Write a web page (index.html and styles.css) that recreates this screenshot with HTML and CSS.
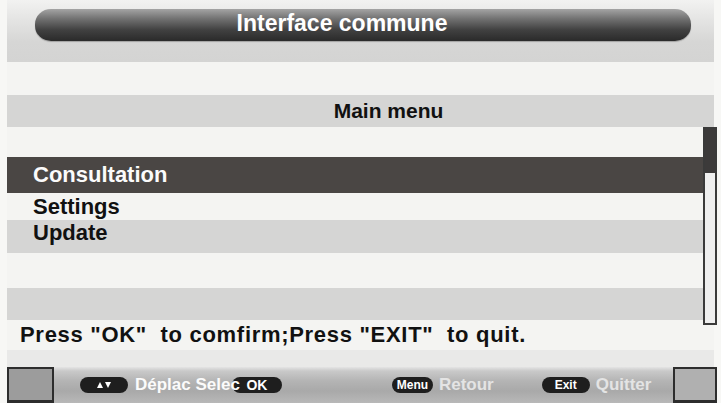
FILE: index.html
```html
<!DOCTYPE html>
<html>
<head>
<meta charset="utf-8">
<link rel="stylesheet" href="styles.css">
</head>
<body>
<div class="screen">
  <div class="header">
    <div class="capsule">Interface commune</div>
  </div>
  <div class="list">
    <div class="row light h33"></div>
    <div class="row gray h32 center">Main menu</div>
    <div class="row light h30"></div>
    <div class="row sel h36">Consultation</div>
    <div class="row light h27">Settings</div>
    <div class="row gray h33 up">Update</div>
    <div class="row light h35"></div>
    <div class="row gray h32"></div>
    <div class="row light h30 hint">Press "OK"&nbsp; to comfirm;Press "EXIT"&nbsp; to quit.</div>
    <div class="row pale h17"></div>
    <div class="scrollbar"><div class="thumb"></div></div>
  </div>
  <div class="footer">
    <div class="box"></div>
    <div class="keys">
      <span class="pill arrows"><svg width="16" height="8" viewBox="0 0 16 8"><path d="M1 7 L4 1 L7 7 Z" fill="#fff"/><path d="M9 1 L15 1 L12 7 Z" fill="#fff"/></svg></span>
      <span class="label white">Déplac Selec</span><span class="pill ok">OK</span>
      <span class="spacer1"></span>
      <span class="pill menu">Menu</span><span class="label">Retour</span>
      <span class="spacer2"></span>
      <span class="pill exit">Exit</span><span class="label">Quitter</span>
    </div>
    <div class="box right"></div>
  </div>
</div>
</body>
</html>
```
FILE: styles.css
```css
html, body {
  margin: 0;
  padding: 0;
  background: #f7f7f5;
}
.screen {
  width: 721px;
  height: 403px;
  display: flex;
  flex-direction: column;
  font-family: "Liberation Sans", Arial, sans-serif;
  font-weight: bold;
  overflow: hidden;
}
.header {
  height: 62px;
  margin: 0 7px;
  background: linear-gradient(to bottom, #f2f2f1 0px, #e4e4e3 20px, #d6d6d5 42px, #d4d4d3 62px);
  padding-top: 9px;
  box-sizing: border-box;
}
.capsule {
  margin: 0 23px 0 28px;
  padding-right: 42px;
  height: 32px;
  border-radius: 16px / 15px;
  background: linear-gradient(to bottom, #a4a4a4 0%, #727272 30%, #414141 65%, #2a2a2a 100%);
  color: #fff;
  font-size: 23px;
  line-height: 28px;
  text-align: center;
  box-shadow: 0 1px 1px rgba(0,0,0,0.25);
}
.list {
  position: relative;
  margin: 0 7px;
  display: flex;
  flex-direction: column;
}
.row {
  color: #111;
  font-size: 22px;
  padding-left: 26px;
  display: flex;
  align-items: center;
  box-sizing: border-box;
}
.light { background: #f4f4f2; }
.gray { background: #d5d5d4; }
.pale { background: #e9e9e8; }
.sel {
  background: #4a4644;
  color: #fbfbfb;
  margin-right: 11px;
}
.center {
  justify-content: center;
  padding-left: 56px;
  font-size: 21px;
}
.up { padding-bottom: 7px; }
.hint {
  padding-left: 13px;
  font-size: 22px;
  letter-spacing: 0.7px;
}
.h17 { height: 17px; }
.h27 { height: 27px; }
.h30 { height: 30px; }
.h32 { height: 32px; }
.h33 { height: 33px; }
.h35 { height: 35px; }
.h36 { height: 36px; }
.scrollbar {
  position: absolute;
  left: 696px;
  top: 65px;
  width: 10px;
  height: 194px;
  border: 2px solid #3a3a3a;
  background: #efefef;
}
.thumb {
  height: 44px;
  background: #3c3a3a;
}
.footer {
  height: 36px;
  margin: 0 4px 0 7px;
  display: flex;
  align-items: stretch;
  background: linear-gradient(to bottom, #e4e4e4 0px, #c9c9c9 4px, #b4b4b4 14px, #a9a9a9 24px, #b8b8b8 36px);
}
.box {
  width: 47px;
  border: 2px solid #2d2d2d;
  border-bottom-width: 3px;
  background: #9c9c9c;
  box-sizing: border-box;
}
.box.right {
  width: 44px;
  background: #b0b0b0;
}
.keys {
  flex: 1;
  display: flex;
  align-items: center;
  padding-left: 26px;
  font-size: 15px;
}
.pill {
  display: inline-flex;
  align-items: center;
  justify-content: center;
  height: 16px;
  border-radius: 8px;
  background: #1e1e1e;
  color: #fff;
  font-size: 12px;
}
.arrows { width: 48px; }
.ok { width: 50px; font-size: 14px; margin-left: -8px; }
.menu { width: 41px; }
.exit { width: 48px; }
.label {
  color: #e4e4e4;
  font-size: 17px;
  margin-left: 6px;
}
.label.white {
  color: #fbfbfb;
  margin-left: 7px;
  position: relative;
  z-index: 1;
}
.spacer1 { width: 110px; }
.spacer2 { width: 48px; }
```
